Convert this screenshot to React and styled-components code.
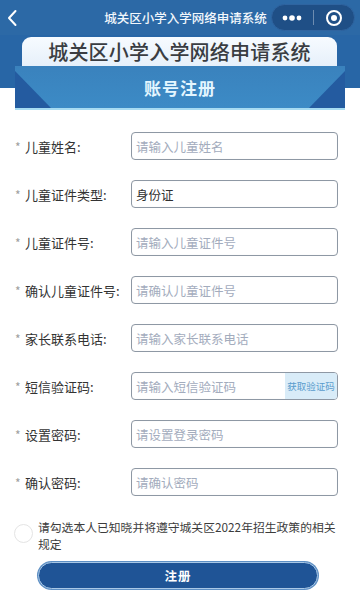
import React from "react";
import styled, { createGlobalStyle } from "styled-components";

const Global = createGlobalStyle`
  html, body { margin: 0; padding: 0; background: #ffffff; }
  body { font-family: "Noto Sans CJK SC", "Noto Sans", sans-serif; }
  * { box-sizing: border-box; }
`;

const Page = styled.div`
  width: 360px;
  height: 602px;
  overflow: hidden;
  background: #ffffff;
`;

const NavBar = styled.div`
  height: 35px;
  background: #2c69a6;
  display: flex;
  align-items: center;
  padding: 0 5px 0 6px;
`;

const BackBtn = styled.div`
  width: 14px;
  height: 20px;
  display: flex;
  align-items: center;
`;

const NavTitle = styled.div`
  flex: 1;
  text-align: center;
  color: #f2f7fc;
  font-size: 12.5px;
  font-weight: 500;
  padding-left: 80px;
  padding-right: 0;
  white-space: nowrap;
`;

const Capsule = styled.div`
  width: 84px;
  height: 27px;
  border-radius: 14px;
  background: #1f4f86;
  border: 1px solid #2f64a0;
  display: flex;
  align-items: center;
`;

const CapHalf = styled.div`
  flex: 1;
  height: 100%;
  display: flex;
  align-items: center;
  justify-content: center;
`;

const CapDivider = styled.div`
  width: 1px;
  height: 15px;
  background: rgba(255, 255, 255, 0.35);
`;

const Header = styled.div`
  background: linear-gradient(#2866a6 0, #2866a6 53px, #ffffff 53px);
  padding: 2px 15px 0;
`;

const TitleBox = styled.div`
  margin: 0 8px 0 7px;
  height: 29px;
  border-radius: 9px 9px 0 0;
  background: linear-gradient(#f7fbff, #e6f0fa);
  display: flex;
  align-items: center;
  justify-content: center;
  color: #3a3d42;
  font-size: 20px;
  font-weight: 500;
  letter-spacing: 0.2px;
`;

const Band = styled.div`
  height: 44px;
  position: relative;
  background: linear-gradient(#3a82bd, #3c8bc6);
  border-bottom: 2px solid #a7dcf2;
  display: flex;
  align-items: center;
  justify-content: center;
  color: #e3f6ff;
  font-size: 17px;
  font-weight: 700;
  letter-spacing: 1px;
  overflow: hidden;
`;

const Corner = styled.div`
  position: absolute;
  bottom: 0;
  ${(p) => (p.$right ? "right: 0;" : "left: 0;")}
  width: 36px;
  height: 37px;
  background: #245ba0;
  clip-path: ${(p) =>
    p.$right ? "polygon(100% 0, 100% 100%, 0 100%)" : "polygon(0 0, 0 100%, 100% 100%)"};
`;

const BandText = styled.span`
  position: relative;
`;

const Form = styled.div`
  padding: 22px 0 0 15px;
  display: flex;
  flex-direction: column;
  gap: 20px;
`;

const Row = styled.div`
  display: flex;
  align-items: center;
  height: 28px;
`;

const Label = styled.div`
  width: 116px;
  font-size: 13px;
  color: #333333;
  white-space: nowrap;
  display: flex;
  align-items: center;
`;

const Star = styled.span`
  color: #a0a0a0;
  font-size: 12px;
  width: 10px;
  line-height: 1;
  padding-top: 2px;
`;

const InputBox = styled.div`
  width: 207px;
  height: 28px;
  border: 1px solid #8e98a4;
  border-radius: 4px;
  display: flex;
  align-items: center;
  overflow: hidden;
  box-shadow: inset 0 0 1px rgba(0, 0, 0, 0.1);
`;

const Field = styled.div`
  flex: 1;
  padding-left: 4px;
  font-size: 12.5px;
  color: ${(p) => (p.$filled ? "#2f2f2f" : "#a3acbd")};
  white-space: nowrap;
`;

const CodeBtn = styled.div`
  width: 52px;
  height: 100%;
  background: #d9ecf8;
  color: #5a9ccd;
  font-size: 9.5px;
  display: flex;
  align-items: center;
  justify-content: center;
  white-space: nowrap;
`;

const Agree = styled.div`
  display: flex;
  align-items: flex-start;
  margin-top: 22px;
  padding-left: 14px;
`;

const Circle = styled.div`
  width: 19px;
  height: 19px;
  border-radius: 50%;
  border: 1px solid #e4e4e4;
  margin-top: 6px;
  flex: none;
`;

const AgreeText = styled.div`
  margin-left: 5px;
  font-size: 11.8px;
  line-height: 17px;
  color: #3c3c3c;
  width: 310px;
  white-space: nowrap;
`;

const SubmitWrap = styled.div`
  display: flex;
  padding-left: 38px;
  margin-top: 10px;
`;

const Submit = styled.div`
  width: 280px;
  height: 27px;
  border-radius: 14px;
  background: #1f5496;
  border: 1.5px solid #a9c8e6;
  box-shadow: 0 0 0 1px #5d8fc4;
  display: flex;
  align-items: center;
  justify-content: center;
  color: #ffffff;
  font-size: 12.5px;
  font-weight: 700;
  letter-spacing: 1px;
`;

const rows = [
  { label: "儿童姓名:", ph: "请输入儿童姓名" },
  { label: "儿童证件类型:", value: "身份证" },
  { label: "儿童证件号:", ph: "请输入儿童证件号" },
  { label: "确认儿童证件号:", ph: "请确认儿童证件号" },
  { label: "家长联系电话:", ph: "请输入家长联系电话" },
  { label: "短信验证码:", ph: "请输入短信验证码", code: true },
  { label: "设置密码:", ph: "请设置登录密码" },
  { label: "确认密码:", ph: "请确认密码" },
];

export default function App() {
  return (
    <Page>
      <Global />
      <NavBar>
        <BackBtn>
          <svg width="12" height="18" viewBox="0 0 12 18">
            <path d="M9.5 2 L3 9 L9.5 16" fill="none" stroke="#ffffff" strokeWidth="2" strokeLinecap="round" strokeLinejoin="round" />
          </svg>
        </BackBtn>
        <NavTitle>城关区小学入学网络申请系统</NavTitle>
        <Capsule>
          <CapHalf>
            <svg width="20" height="6" viewBox="0 0 20 6">
              <circle cx="3" cy="3" r="2.4" fill="#fff" />
              <circle cx="10" cy="3" r="2.8" fill="#fff" />
              <circle cx="17" cy="3" r="2.4" fill="#fff" />
            </svg>
          </CapHalf>
          <CapDivider />
          <CapHalf>
            <svg width="18" height="18" viewBox="0 0 18 18">
              <circle cx="9" cy="9" r="7" fill="none" stroke="#fff" strokeWidth="2" />
              <circle cx="9" cy="9" r="3" fill="#fff" />
            </svg>
          </CapHalf>
        </Capsule>
      </NavBar>
      <Header>
        <TitleBox>城关区小学入学网络申请系统</TitleBox>
        <Band>
          <Corner />
          <Corner $right />
          <BandText>账号注册</BandText>
        </Band>
      </Header>
      <Form>
        {rows.map((r) => (
          <Row key={r.label}>
            <Label>
              <Star>*</Star>
              {r.label}
            </Label>
            <InputBox>
              <Field $filled={!!r.value}>{r.value || r.ph}</Field>
              {r.code && <CodeBtn>获取验证码</CodeBtn>}
            </InputBox>
          </Row>
        ))}
      </Form>
      <Agree>
        <Circle />
        <AgreeText>
          请勾选本人已知晓并将遵守城关区2022年招生政策的相关
          <br />
          规定
        </AgreeText>
      </Agree>
      <SubmitWrap>
        <Submit>注册</Submit>
      </SubmitWrap>
    </Page>
  );
}
